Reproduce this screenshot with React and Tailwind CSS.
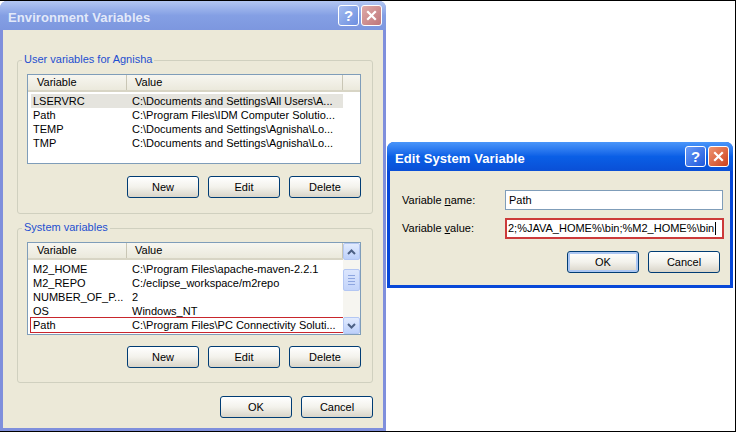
import React from 'react';

const XIcon = () => (
  <svg width="11" height="11" viewBox="0 0 11 11">
    <path d="M2 2L9 9M9 2L2 9" stroke="white" strokeWidth="2.2" strokeLinecap="square" />
  </svg>
);

const TitleButtons = ({ active }) => (
  <div className="flex gap-[2px]">
    <div
      className={`w-[21px] h-[21px] rounded-[3px] border border-white flex items-center justify-center text-white font-bold text-[15px] leading-none ${
        active ? 'bg-linear-to-br from-[#6b9bf7] to-[#1d56db]' : 'bg-linear-to-br from-[#a4bcef] to-[#6d8ee0]'
      }`}
    >
      ?
    </div>
    <div
      className={`w-[21px] h-[21px] rounded-[3px] border border-white flex items-center justify-center ${
        active ? 'bg-linear-to-br from-[#ee9470] to-[#cc3d18]' : 'bg-linear-to-br from-[#deaaa8] to-[#bf767b]'
      }`}
    >
      <XIcon />
    </div>
  </div>
);

const Window = ({ title, active, className, children }) => (
  <div
    className={`flex flex-col rounded-t-[7px] overflow-hidden ${
      active ? 'bg-[#0848d8]' : 'bg-[#7f8fdc]'
    } ${className}`}
  >
    <div
      className={`h-[29px] shrink-0 flex items-center pl-[8px] pr-[4px] ${
        active
          ? 'bg-linear-to-b from-[#4a96fa] via-[#0a5fe6] to-[#0a4fd6]'
          : 'bg-linear-to-b from-[#b3c7f2] via-[#849fe4] to-[#7d97df]'
      }`}
    >
      <span
        className={`flex-1 pt-[4px] font-bold text-[13px] tracking-[0.1px] ${
          active ? 'text-white' : 'text-[#e2e9f9]'
        }`}
      >
        {title}
      </span>
      <TitleButtons active={active} />
    </div>
    <div className="flex-1 mx-[3px] mb-[3px] bg-[#ece9d8] flex flex-col">{children}</div>
  </div>
);

const Btn = ({ children, def }) => (
  <button
    className={`w-[72px] h-[22px] rounded-[3px] border border-[#003c74] bg-linear-to-b from-white via-[#f3f2ec] to-[#d9d5c9] flex items-center justify-center text-[11px] text-black ${
      def ? 'shadow-[inset_0_0_0_2px_#abc6f2]' : ''
    }`}
  >
    {children}
  </button>
);

const ListHeader = () => (
  <div className="flex h-[17px] shrink-0 bg-linear-to-b from-[#f7f6f0] to-[#ebe9dc] border-b-2 border-[#d8d5c5] text-[11px] leading-[15px]">
    <div className="w-[99px] pl-[9px] border-r border-[#c9c6b5]">Variable</div>
    <div className="w-[216px] pl-[8px] border-r border-[#c9c6b5]">Value</div>
  </div>
);

const Row = ({ name, value, selected, marked }) => (
  <div
    className={`flex h-[14px] ml-[3px] w-[312px] text-[11px] leading-[14px] whitespace-nowrap ${
      selected ? 'bg-[#e5e4de]' : ''
    } ${marked ? 'outline outline-[#c8262c]' : ''}`}
  >
    <div className="w-[101px] pl-[2px]">{name}</div>
    <div>{value}</div>
  </div>
);

const Chevron = ({ up }) => (
  <svg width="9" height="6" viewBox="0 0 9 6">
    <path
      d={up ? 'M1 5L4.5 1.5L8 5' : 'M1 1L4.5 4.5L8 1'}
      fill="none"
      stroke="#4d6185"
      strokeWidth="2"
    />
  </svg>
);

const ScrollBtn = ({ up }) => (
  <div className="w-[17px] h-[17px] rounded-[2px] border border-[#b4c7f3] bg-linear-to-b from-[#e2ebfe] to-[#bcd0fa] flex items-center justify-center">
    <Chevron up={up} />
  </div>
);

const ScrollBar = () => (
  <div className="w-[17px] flex flex-col bg-[#f6f5f0] shrink-0">
    <ScrollBtn up />
    <div className="mt-[9px] h-[22px] rounded-[2px] border border-[#b4c7f3] bg-linear-to-b from-[#dce6fd] to-[#c3d4fa] flex flex-col items-center justify-center gap-[2px]">
      <div className="w-[7px] h-[1px] bg-[#8ea6e0]" />
      <div className="w-[7px] h-[1px] bg-[#8ea6e0]" />
      <div className="w-[7px] h-[1px] bg-[#8ea6e0]" />
      <div className="w-[7px] h-[1px] bg-[#8ea6e0]" />
    </div>
    <div className="flex-1" />
    <ScrollBtn />
  </div>
);

const userVars = [
  ['LSERVRC', 'C:\\Documents and Settings\\All Users\\A...'],
  ['Path', 'C:\\Program Files\\IDM Computer Solutio...'],
  ['TEMP', 'C:\\Documents and Settings\\Agnisha\\Lo...'],
  ['TMP', 'C:\\Documents and Settings\\Agnisha\\Lo...'],
];

const sysVars = [
  ['M2_HOME', 'C:\\Program Files\\apache-maven-2.2.1'],
  ['M2_REPO', 'C:/eclipse_workspace/m2repo'],
  ['NUMBER_OF_P...', '2'],
  ['OS', 'Windows_NT'],
  ['Path', 'C:\\Program Files\\PC Connectivity Soluti...'],
];

const ActionRow = () => (
  <div className="flex justify-end gap-[9px]">
    <Btn>New</Btn>
    <Btn>Edit</Btn>
    <Btn>Delete</Btn>
  </div>
);

const Legend = ({ children }) => (
  <div className="-mt-[8px] ml-[4px] px-[2px] w-fit bg-[#ece9d8] text-[11px] leading-[13px] text-[#1e4fd0]">
    {children}
  </div>
);

export default function App() {
  return (
    <div className="w-[740px] h-[434px] bg-white font-['Liberation_Sans',Arial,sans-serif] text-black">
      <div className="w-[736px] h-[432px] border-t border-r border-b border-black flex items-start">
        {/* Environment Variables */}
        <Window title="Environment Variables" className="w-[386px] h-[430px] shrink-0">
          <div className="mt-[30px] ml-[14px] w-[356px] h-[154px] border border-[#d0d0bf] rounded-[3px]">
            <Legend>User variables for Agnisha</Legend>
            <div className="ml-[9px] mt-[8px] w-[334px]">
              <div className="h-[90px] border border-[#7f9db9] bg-white flex flex-col">
                <ListHeader />
                <div className="pt-[2px]">
                  {userVars.map(([n, v], i) => (
                    <Row key={n} name={n} value={v} selected={i === 0} />
                  ))}
                </div>
              </div>
              <div className="mt-[12px]">
                <ActionRow />
              </div>
            </div>
          </div>

          <div className="mt-[14px] ml-[14px] w-[356px] h-[155px] border border-[#d0d0bf] rounded-[3px]">
            <Legend>System variables</Legend>
            <div className="ml-[9px] mt-[8px] w-[334px]">
              <div className="h-[93px] border border-[#7f9db9] bg-white flex">
                <div className="flex-1 flex flex-col">
                  <ListHeader />
                  <div className="pt-[2px]">
                    {sysVars.map(([n, v], i) => (
                      <Row key={n} name={n} value={v} marked={i === 4} />
                    ))}
                  </div>
                </div>
                <ScrollBar />
              </div>
              <div className="mt-[11px]">
                <ActionRow />
              </div>
            </div>
          </div>

          <div className="mt-[13px] mr-[10px] flex justify-end gap-[9px]">
            <Btn>OK</Btn>
            <Btn>Cancel</Btn>
          </div>
        </Window>

        {/* Edit System Variable */}
        <Window title="Edit System Variable" active className="ml-[1px] mt-[141px] w-[346px] h-[146px]">
          <div className="pt-[19px] pl-[12px] text-[11px]">
            <div className="flex items-center h-[20px]">
              <div className="w-[103px]">
                Variable <span className="underline">n</span>ame:
              </div>
              <div className="w-[218px] h-[20px] border border-[#7f9db9] bg-white pl-[3px] leading-[18px]">Path</div>
            </div>
            <div className="flex items-center h-[21px] mt-[8px]">
              <div className="w-[103px]">
                Variable <span className="underline">v</span>alue:
              </div>
              <div className="w-[219px] h-[21px] border-2 border-[#cc3a3a] bg-white pl-[1px] leading-[17px] whitespace-nowrap flex items-center">
                2;%JAVA_HOME%\bin;%M2_HOME%\bin
                <span className="inline-block w-[1px] h-[13px] bg-black ml-[1px]" />
              </div>
            </div>
          </div>
          <div className="mt-[12px] mr-[10px] flex justify-end gap-[9px]">
            <Btn def>OK</Btn>
            <Btn>Cancel</Btn>
          </div>
        </Window>
      </div>
    </div>
  );
}
